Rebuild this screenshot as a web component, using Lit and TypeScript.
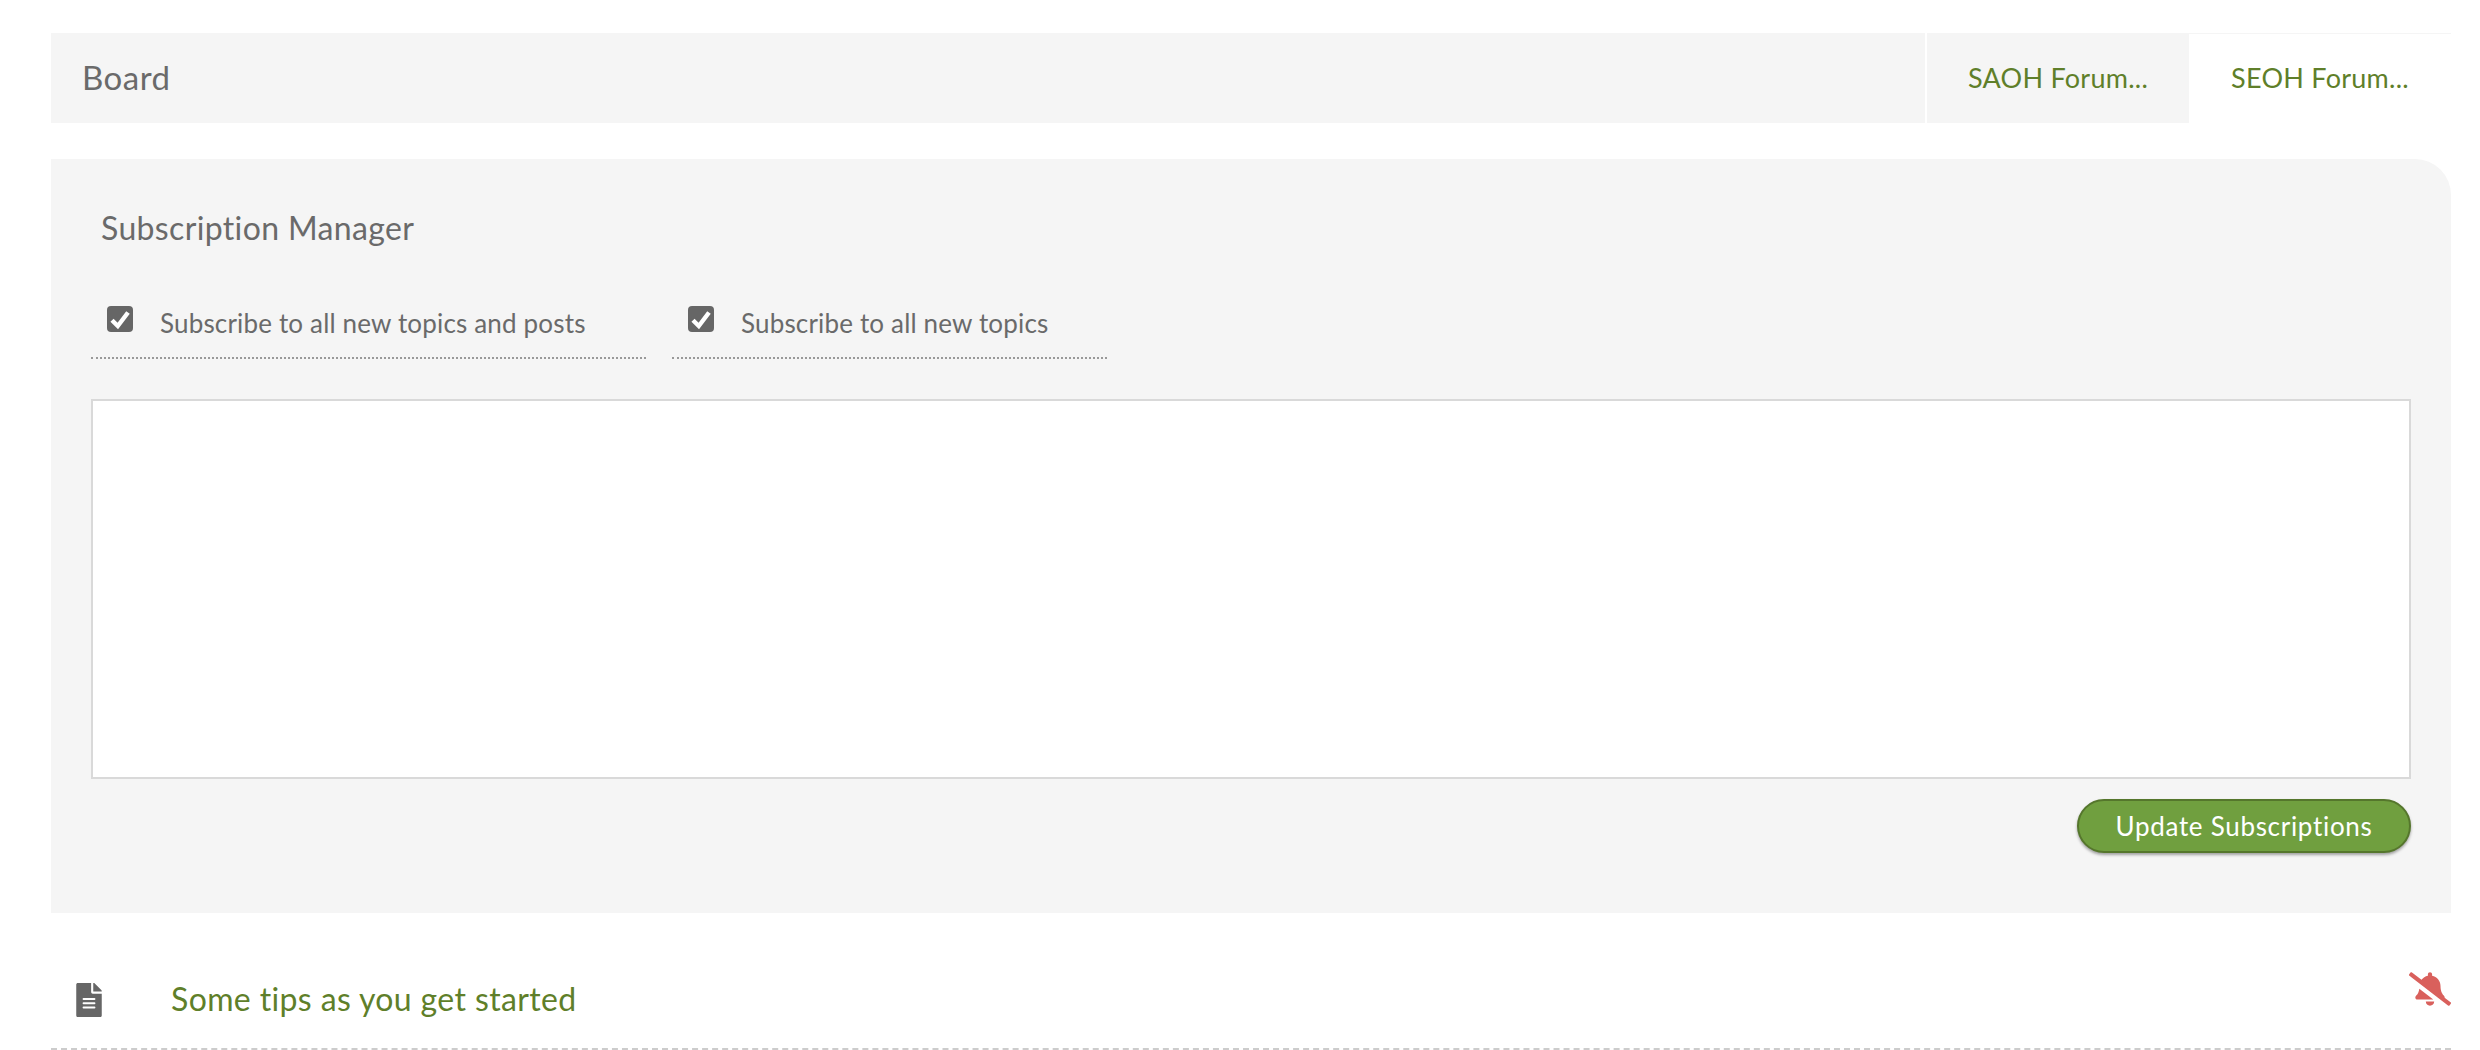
import { LitElement, html, css } from "lit";
import { customElement } from "lit/decorators.js";

const checkIcon = html`<svg class="check" viewBox="0 0 26 26" aria-hidden="true"><rect class="check-box" width="26" height="26" rx="4"/><polyline class="check-mark" points="5,14.2 10.8,20 21,6.5"/></svg>`;

@customElement("app-root")
export class AppRoot extends LitElement {
  static styles = css`
    :host {
      display: block;
      box-sizing: border-box;
      height: 1050px;
      overflow: hidden;
      padding: 33px 29px 0 51px;
      background: #fff;
      font-family: Lato, "Liberation Sans", sans-serif;
      font-weight: 400;
      color: #6a6a6a;
    }
    .tabs { display: flex; gap: 2px; height: 90px; }
    .board {
      flex: 1;
      display: flex;
      align-items: center;
      padding: 0 0 2px 31px;
      background: #f5f5f5;
      font-size: 33px;
      letter-spacing: 0.5px;
    }
    .tab {
      box-sizing: border-box;
      width: 262px;
      display: flex;
      align-items: center;
      justify-content: center;
      padding-bottom: 2px;
      color: #5f7f2a;
      font-size: 27px;
      letter-spacing: 0.25px;
      background: #f5f5f5;
    }
    .tab.active { background: #fff; border-top: 1px solid #f5f5f5; margin-left: -2px; }
    .panel {
      box-sizing: border-box;
      height: 754px;
      margin-top: 36px;
      padding: 49px 40px 0;
      background: #f5f5f5;
      border-top-right-radius: 36px;
    }
    .title { padding-left: 10px; font-size: 32px; line-height: 40px; letter-spacing: 0.35px; }
    .options { display: flex; gap: 26px; margin-top: 39px; }
    .option {
      box-sizing: border-box;
      height: 72px;
      padding: 19px 0 0 16px;
      display: flex;
      align-items: flex-start;
      border-bottom: 2px dotted #999;
      font-size: 26px;
      letter-spacing: 0.17px;
    }
    .first { width: 555px; }
    .second { width: 435px; }
    .check { width: 26px; height: 26px; flex: none; }
    .check-box { fill: #666; }
    .check-mark { fill: none; stroke: #fff; stroke-width: 4.4; }
    .option span { margin-left: 27px; line-height: 34px; }
    .box {
      box-sizing: border-box;
      height: 380px;
      margin-top: 40px;
      background: #fff;
      border: 2px solid #d9d9d9;
    }
    .actions { display: flex; justify-content: flex-end; margin-top: 20px; }
    button {
      box-sizing: border-box;
      width: 334px;
      height: 54px;
      padding: 0;
      border: 2px solid #55762c;
      border-radius: 27px;
      background: #709f3f;
      box-shadow: 0 2px 3px rgba(0, 0, 0, 0.35);
      color: #fff;
      font: 400 26px Lato, "Liberation Sans", sans-serif;
      letter-spacing: 0.7px;
    }
    .row {
      box-sizing: border-box;
      height: 137px;
      display: flex;
      align-items: flex-start;
      border-bottom: 2px dashed #ccc;
    }
    .file { width: 26px; height: 34px; fill: #666; margin: 70px 0 0 25px; flex: none; }
    .topic { margin: 64px 0 0 69px; flex: 1; font-size: 32px; line-height: 44px; letter-spacing: 0.37px; color: #5f7f2a; }
    .bell { width: 42px; height: 34px; fill: #d9605c; margin-top: 59px; flex: none; }
  `;

  render() {
    return html`
      <div class="tabs">
        <div class="board">Board</div>
        <div class="tab">SAOH Forum...</div>
        <div class="tab active">SEOH Forum...</div>
      </div>
      <section class="panel">
        <div class="title">Subscription Manager</div>
        <div class="options">
          <label class="option first">${checkIcon}<span>Subscribe to all new topics and posts</span></label>
          <label class="option second">${checkIcon}<span>Subscribe to all new topics</span></label>
        </div>
        <div class="box"></div>
        <div class="actions"><button>Update Subscriptions</button></div>
      </section>
      <div class="row">
        <svg class="file" viewBox="0 0 384 512" aria-hidden="true"><path d="M224 136V0H24C10.7 0 0 10.7 0 24v464c0 13.3 10.7 24 24 24h336c13.3 0 24-10.7 24-24V160H248c-13.2 0-24-10.8-24-24zm64 236c0 6.6-5.4 12-12 12H108c-6.6 0-12-5.4-12-12v-8c0-6.6 5.4-12 12-12h168c6.6 0 12 5.4 12 12v8zm0-64c0 6.6-5.4 12-12 12H108c-6.6 0-12-5.4-12-12v-8c0-6.6 5.4-12 12-12h168c6.6 0 12 5.4 12 12v8zm0-72v8c0 6.6-5.4 12-12 12H108c-6.6 0-12-5.4-12-12v-8c0-6.6 5.4-12 12-12h168c6.6 0 12 5.4 12 12zm96-114.1v6.1H256V0h6.1c6.4 0 12.5 2.5 17 7l97.9 98c4.5 4.5 7 10.6 7 16.9z"/></svg>
        <div class="topic">Some tips as you get started</div>
        <svg class="bell" viewBox="0 0 640 512" aria-hidden="true"><path d="M633.82 458.1l-90.62-70.05c.19-1.38.8-2.66.8-4.06.05-7.55-2.61-15.27-8.61-21.71-19.32-20.76-55.47-51.99-55.47-154.29 0-77.7-54.48-139.9-127.94-155.16V32c0-17.67-14.32-32-31.98-32s-31.98 14.33-31.98 32v20.84c-40.33 8.38-74.66 31.07-97.59 62.57L45.47 3.37C38.49-2.05 28.43-.8 23.01 6.18L3.37 31.45C-2.05 38.42-.8 48.47 6.18 53.9l588.36 454.73c6.98 5.43 17.03 4.17 22.46-2.81l19.64-25.27c5.42-6.97 4.17-17.02-2.82-22.45zM157.23 251.54c-8.61 67.96-36.41 93.33-52.62 110.75-6 6.45-8.66 14.16-8.61 21.71.11 16.4 12.98 32 32.1 32h241.92L157.23 251.54zM320 512c35.32 0 63.97-28.65 63.97-64H256.03c0 35.35 28.65 64 63.97 64z"/></svg>
      </div>
    `;
  }
}
